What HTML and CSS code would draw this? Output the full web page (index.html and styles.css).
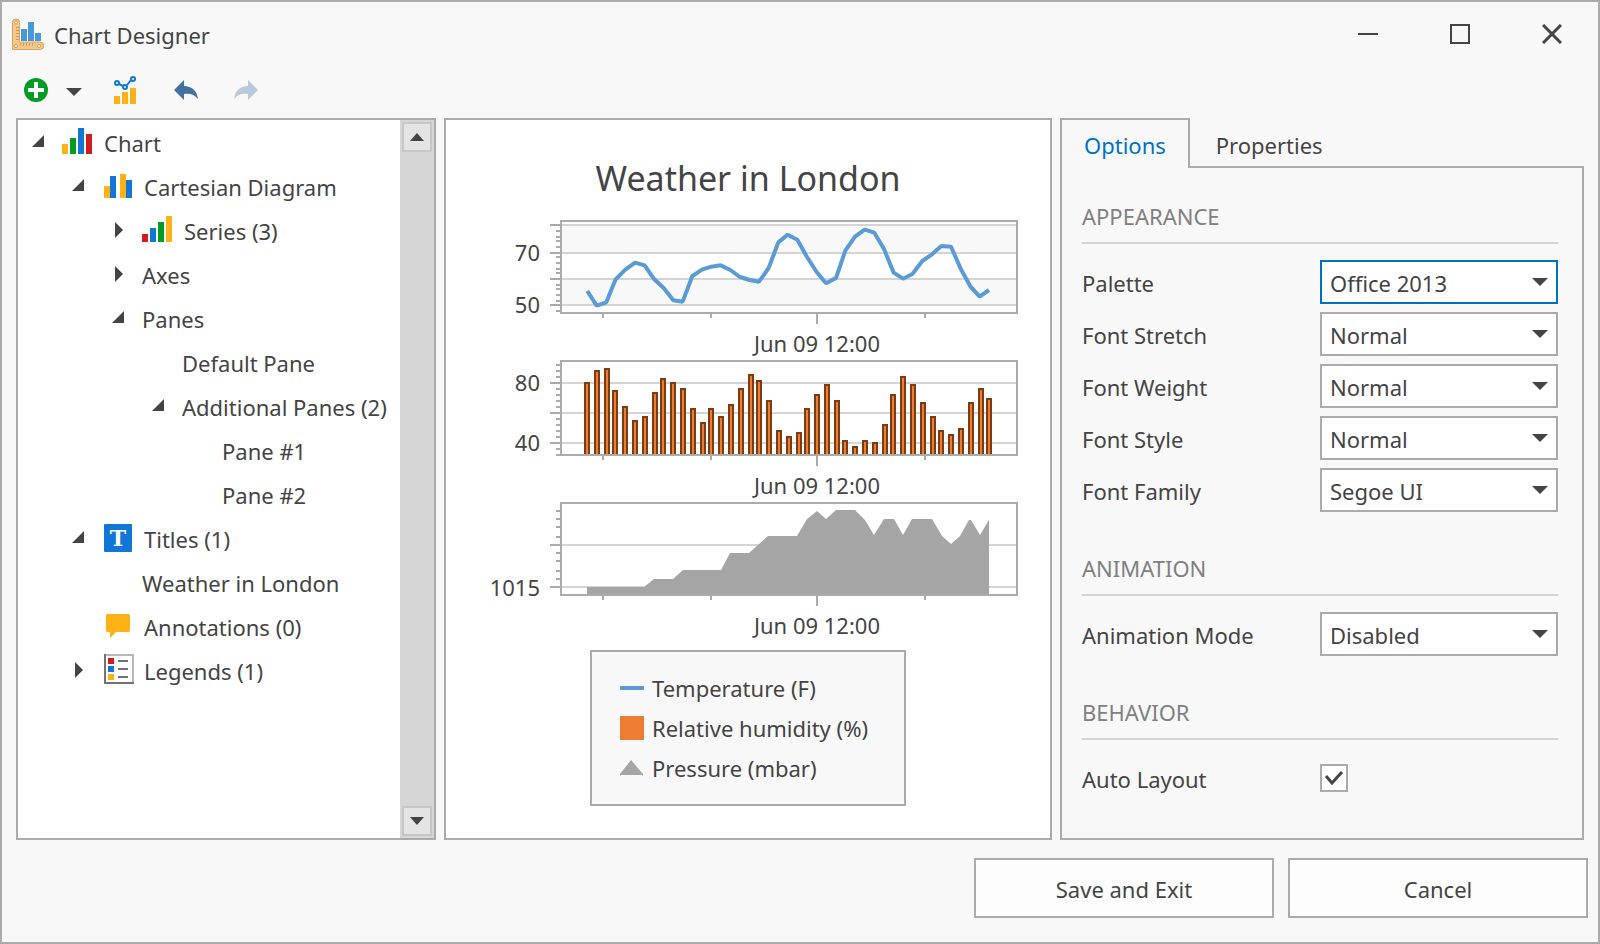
FILE: index.html
```html
<!DOCTYPE html>
<html lang="en">
<head>
<meta charset="utf-8">
<title>Chart Designer</title>
<meta name="viewport" content="width=device-width, initial-scale=1">
<link rel="stylesheet" href="styles.css">
</head>
<body>
<div class="window">
  <header class="titlebar">
    <svg class="app-icon" viewBox="0 0 32 32" aria-hidden="true">
      <g fill="#4a98dc"><path d="M9 11h6v12H9z"/><path d="M16 4h6v19h-6z"/><path d="M23 15h6v8h-6z"/></g>
      <path d="M.5 31.500V4.500a3.500 3.500 0 0 1 7 0V24H28a3.500 3.500 0 0 1 0 7.500z" fill="#f3c88d" stroke="#dfa35a"/>
      <path d="M4 9.500h3M4 12.500h3M4 15.500h3M4 18.500h3M4 21.500h3M8.500 25v3M11.500 25v3M14.500 25v3M17.500 25v3M20.500 25v3" stroke="#d49a52" fill="none"/>
      <g fill="#fff" stroke="#d49a52"><circle cx="4" cy="4.500" r="1.500"/><circle cx="4" cy="28" r="1.500"/><circle cx="27" cy="28" r="1.500"/></g>
    </svg>
    <h1 class="title">Chart Designer</h1>
    <div class="window-buttons">
      <button class="window-button" type="button" aria-label="Minimize"><svg viewBox="0 0 20 20"><path d="M0 10h20"/></svg></button>
      <button class="window-button" type="button" aria-label="Maximize"><svg viewBox="0 0 20 20"><path d="M1 1h18v18H1z"/></svg></button>
      <button class="window-button" type="button" aria-label="Close"><svg viewBox="0 0 20 20"><path d="M1 1l18 18M19 1L1 19"/></svg></button>
    </div>
  </header>

  <div class="toolbar" role="toolbar" aria-label="Chart tools">
    <button class="tool" type="button" aria-label="Add"><svg width="24" height="24" viewBox="0 0 24 24"><circle cx="12" cy="12" r="12" fill="#039c23"/><path d="M10 4h4v6h6v4h-6v6h-4v-6H4v-4h6z" fill="#fff"/></svg></button>
    <button class="tool tool-menu" type="button" aria-label="Add menu"><svg width="16" height="8" viewBox="0 0 16 8"><path d="M0 0h16L8 8z" fill="#444"/></svg></button>
    <button class="tool tool-type" type="button" aria-label="Change chart type"><svg width="24" height="28" viewBox="0 0 24 28"><path d="M0 20h6v8H0zM8 16h6v12H8zM16 12h6v16h-6z" fill="#ffb115"/><path d="M5 8l4 2M13 9l4-5" stroke="#1177d7" stroke-width="2"/><g fill="none" stroke="#1177d7" stroke-width="2"><circle cx="3" cy="7" r="2"/><circle cx="11" cy="11" r="2"/><circle cx="19" cy="3" r="2"/></g></svg></button>
    <button class="tool" type="button" aria-label="Undo"><svg width="24" height="20" viewBox="0 0 24 20"><path d="M0 10L10 0v6c8 0 13 5 14 13-4-5-8-6-14-5v6z" fill="#4272a1"/></svg></button>
    <button class="tool" type="button" aria-label="Redo" disabled><svg width="24" height="20" viewBox="0 0 24 20"><path d="M24 10L14 0v6C6 6 1 11 0 19c4-5 8-6 14-5v6z" fill="#b9c8da"/></svg></button>
  </div>

  <main class="panels">
    <section class="panel tree-panel" aria-label="Chart structure">
      <ul class="tree">
        <li>
          <div class="row">
            <button class="expander" type="button" aria-label="Collapse Chart"><svg viewBox="0 0 44 44"><path d="M26 14v12H14z"/></svg></button>
            <svg class="node-icon" viewBox="0 0 32 44"><path d="M0 23h6v10H0z" fill="#ffb115"/><path d="M8 17h6v16H8z" fill="#039c23"/><path d="M16 7h6v26h-6z" fill="#1177d7"/><path d="M24 13h6v20h-6z" fill="#d11c1c"/></svg>
            <span>Chart</span>
          </div>
          <ul>
            <li>
              <div class="row">
                <button class="expander" type="button" aria-label="Collapse Cartesian Diagram"><svg viewBox="0 0 44 44"><path d="M26 14v12H14z"/></svg></button>
                <svg class="node-icon" viewBox="0 0 32 44"><path d="M2 21h6v12H2zM18 9h6v24h-6z" fill="#ffb115"/><path d="M8 11h6v22H8zM24 15h6v18h-6z" fill="#1177d7"/></svg>
                <span>Cartesian Diagram</span>
              </div>
              <ul>
                <li>
                  <div class="row">
                    <button class="expander" type="button" aria-label="Expand Series"><svg viewBox="0 0 44 44"><path d="M17 13l8 8-8 8z"/></svg></button>
                    <svg class="node-icon" viewBox="0 0 32 44"><path d="M0 25h6v8H0z" fill="#d11c1c"/><path d="M8 19h6v14H8z" fill="#1177d7"/><path d="M16 13h6v20h-6z" fill="#039c23"/><path d="M24 7h6v26h-6z" fill="#ffb115"/></svg>
                    <span>Series (3)</span>
                  </div>
                </li>
                <li>
                  <div class="row">
                    <button class="expander" type="button" aria-label="Expand Axes"><svg viewBox="0 0 44 44"><path d="M17 13l8 8-8 8z"/></svg></button>
                    <span>Axes</span>
                  </div>
                </li>
                <li>
                  <div class="row">
                    <button class="expander" type="button" aria-label="Collapse Panes"><svg viewBox="0 0 44 44"><path d="M26 14v12H14z"/></svg></button>
                    <span>Panes</span>
                  </div>
                  <ul>
                    <li><div class="row leaf"><span>Default Pane</span></div></li>
                    <li>
                      <div class="row">
                        <button class="expander" type="button" aria-label="Collapse Additional Panes"><svg viewBox="0 0 44 44"><path d="M26 14v12H14z"/></svg></button>
                        <span>Additional Panes (2)</span>
                      </div>
                      <ul>
                        <li><div class="row leaf"><span>Pane #1</span></div></li>
                        <li><div class="row leaf"><span>Pane #2</span></div></li>
                      </ul>
                    </li>
                  </ul>
                </li>
              </ul>
            </li>
            <li>
              <div class="row">
                <button class="expander" type="button" aria-label="Collapse Titles"><svg viewBox="0 0 44 44"><path d="M26 14v12H14z"/></svg></button>
                <svg class="node-icon" viewBox="0 0 32 44"><rect x="2" y="7" width="28" height="28" rx="1" fill="#1177d7"/><text class="node-letter" x="16" y="29" text-anchor="middle">T</text></svg>
                <span>Titles (1)</span>
              </div>
              <ul>
                <li><div class="row leaf"><span>Weather in London</span></div></li>
              </ul>
            </li>
            <li>
              <div class="row leaf">
                <svg class="node-icon" viewBox="0 0 32 44"><path d="M5 9h22l1 1v16l-1 1H14l-6 6v-6H5l-1-1V10z" fill="#ffb115"/></svg>
                <span>Annotations (0)</span>
              </div>
            </li>
            <li>
              <div class="row">
                <button class="expander" type="button" aria-label="Expand Legends"><svg viewBox="0 0 44 44"><path d="M17 13l8 8-8 8z"/></svg></button>
                <svg class="node-icon" viewBox="0 0 32 44"><path d="M4 6h27v27" fill="none" stroke="#b8b8b8" stroke-width="2"/><path d="M3 5v29h29" fill="none" stroke="#727272" stroke-width="2"/><path d="M6 9h6v6H6z" fill="#d11c1c"/><path d="M6 17h6v6H6z" fill="#1177d7"/><path d="M6 25h6v6H6z" fill="#ffb115"/><path d="M16 12h10M16 20h10M16 28h10" stroke="#727272" stroke-width="2"/></svg>
                <span>Legends (1)</span>
              </div>
            </li>
          </ul>
        </li>
      </ul>
      <div class="scrollbar">
        <button class="scroll-button" type="button" aria-label="Scroll up"><svg width="14" height="8" viewBox="0 0 14 8"><path d="M7 0l7 8H0z"/></svg></button>
        <button class="scroll-button" type="button" aria-label="Scroll down"><svg width="14" height="8" viewBox="0 0 14 8"><path d="M0 0h14L7 8z"/></svg></button>
      </div>
    </section>

    <section class="panel chart-panel" aria-label="Chart preview">
      <h2 class="chart-title">Weather in London</h2>
      <svg class="chart" viewBox="472 216 552 424" role="img" aria-label="Temperature, humidity and pressure over time">
        <!-- temperature pane -->
        <path class="band" d="M561 225h456v28H561zM561 279h456v26H561z"/>
        <path class="grid" d="M561 225h456M561 253h456M561 279h456M561 305h456"/>
        <svg x="540" y="210" width="490" height="150" viewBox="0 0 1470 450">
          <polyline class="temperature" points="142,243 170,287 199,277 227,208 256,179 285,158 314,166 342,207 371,234 400,271 428,275 457,198 486,179 514,170 542,166 571,180 600,201 629,210 657,215 686,174 715,97 743,74 772,89 801,141 830,186 858,220 888,204 916,122 945,80 974,59 1003,68 1032,117 1061,188 1089,206 1117,192 1147,153 1176,133 1204,108 1233,110 1262,176 1291,229 1319,260 1347,240"/>
        </svg>
        <path class="axis" d="M561 221h456v92H561z"/>
        <path class="axis" d="M550 225h10M550 253h10M550 279h10M550 305h10M556 231h4M556 237h4M556 241h4M556 247h4M556 257h4M556 263h4M556 269h4M556 273h4M556 285h4M556 289h4M556 295h4M556 301h4M556 311h4M603 314v4M711 314v4M817 314v10M925 314v4"/>
        <text x="540" y="261" text-anchor="end">70</text>
        <text x="540" y="313" text-anchor="end">50</text>
        <text x="817" y="352" text-anchor="middle">Jun 09 12:00</text>

        <!-- humidity pane -->
        <path class="grid" d="M561 383h456M561 413h456M561 443h456"/>
        <svg x="540" y="350" width="490" height="150" viewBox="0 0 1470 450">
          <path class="humidity" d="M135 315V99h12V315M165 315V63h12V315M195 315V57h12V315M219 315V123h12V315M249 315V171h12V315M279 315V213h12V315M309 315V201h12V315M339 315V129h12V315M363 315V87h12V315M393 315V99h12V315M423 315V117h12V315M453 315V177h12V315M483 315V219h12V315M507 315V177h12V315M537 315V201h12V315M567 315V165h12V315M597 315V117h12V315M627 315V75h12V315M651 315V93h12V315M681 315V153h12V315M711 315V243h12V315M741 315V261h12V315M771 315V249h12V315M795 315V177h12V315M825 315V135h12V315M855 315V105h12V315M885 315V153h12V315M909 315V273h12V315M939 315V291h12V315M969 315V273h12V315M999 315V279h12V315M1029 315V225h12V315M1053 315V135h12V315M1083 315V81h12V315M1113 315V105h12V315M1143 315V159h12V315M1173 315V201h12V315M1197 315V243h12V315M1227 315V255h12V315M1257 315V237h12V315M1287 315V159h12V315M1317 315V117h12V315M1341 315V147h12V315"/>
        </svg>
        <path class="axis" d="M561 361h456v94H561z"/>
        <path class="axis" d="M550 383h10M550 413h10M550 443h10M556 365h4M556 371h4M556 377h4M556 389h4M556 395h4M556 401h4M556 407h4M556 419h4M556 425h4M556 431h4M556 437h4M556 449h4M556 455h4M603 456v4M711 456v4M817 456v10M925 456v4"/>
        <text x="540" y="391" text-anchor="end">80</text>
        <text x="540" y="451" text-anchor="end">40</text>
        <text x="817" y="494" text-anchor="middle">Jun 09 12:00</text>

        <!-- pressure pane -->
        <path class="grid" d="M561 545h456M561 587h456"/>
        <path class="pressure" d="M587 595V587H644L654 579H673L683 570H721L730 553H749L768 536H797L807 519L817 511L826 519L836 510H855L865 520L874 535L884 519H894L903 535L912 519H932L942 536L951 544L960 536L969 520H971L980 535L989 520V595z"/>
        <path class="axis" d="M561 503h456v92H561z"/>
        <path class="axis" d="M550 545h10M550 587h10M556 511h4M556 519h4M556 527h4M556 537h4M556 553h4M556 561h4M556 571h4M556 579h4M603 596v4M711 596v4M817 596v10M925 596v4"/>
        <text x="540" y="596" text-anchor="end">1015</text>
        <text x="817" y="634" text-anchor="middle">Jun 09 12:00</text>
      </svg>
      <ul class="legend">
        <li><svg width="24" height="24" viewBox="0 0 24 24"><path d="M0 10h24v4H0z" fill="#5b9bd5"/></svg>Temperature (F)</li>
        <li><svg width="24" height="24" viewBox="0 0 24 24"><path d="M0 0h24v24H0z" fill="#ed7d31"/></svg>Relative humidity (%)</li>
        <li><svg width="24" height="24" viewBox="0 0 24 24"><path d="M11 4l12 14v2L22 19H1L0 20v-2z" fill="#a5a5a5"/></svg>Pressure (mbar)</li>
      </ul>
    </section>

    <section class="side" aria-label="Element settings">
      <div class="tabs" role="tablist">
        <button class="tab active" type="button" role="tab" aria-selected="true">Options</button>
        <button class="tab" type="button" role="tab" aria-selected="false">Properties</button>
      </div>
      <form class="options" role="tabpanel">
        <fieldset class="group">
          <legend class="group-title">APPEARANCE</legend>
          <div class="field"><label for="palette">Palette</label><span class="combo"><select id="palette" class="focused"><option>Office 2013</option></select><svg viewBox="0 0 16 8"><path d="M0 0h16L8 8z"/></svg></span></div>
          <div class="field"><label for="stretch">Font Stretch</label><span class="combo"><select id="stretch"><option>Normal</option></select><svg viewBox="0 0 16 8"><path d="M0 0h16L8 8z"/></svg></span></div>
          <div class="field"><label for="weight">Font Weight</label><span class="combo"><select id="weight"><option>Normal</option></select><svg viewBox="0 0 16 8"><path d="M0 0h16L8 8z"/></svg></span></div>
          <div class="field"><label for="style">Font Style</label><span class="combo"><select id="style"><option>Normal</option></select><svg viewBox="0 0 16 8"><path d="M0 0h16L8 8z"/></svg></span></div>
          <div class="field"><label for="family">Font Family</label><span class="combo"><select id="family"><option>Segoe UI</option></select><svg viewBox="0 0 16 8"><path d="M0 0h16L8 8z"/></svg></span></div>
        </fieldset>
        <fieldset class="group">
          <legend class="group-title">ANIMATION</legend>
          <div class="field"><label for="mode">Animation Mode</label><span class="combo"><select id="mode"><option>Disabled</option></select><svg viewBox="0 0 16 8"><path d="M0 0h16L8 8z"/></svg></span></div>
        </fieldset>
        <fieldset class="group">
          <legend class="group-title">BEHAVIOR</legend>
          <div class="field"><label for="auto">Auto Layout</label><span class="check"><input id="auto" type="checkbox" checked><svg viewBox="0 0 28 28"><path d="M6 12l6 7L22 8"/></svg></span></div>
        </fieldset>
      </form>
    </section>
  </main>

  <footer class="footer">
    <button class="action" type="button">Save and Exit</button>
    <button class="action" type="button">Cancel</button>
  </footer>
</div>
</body>
</html>
```
FILE: styles.css
```css
* {
  box-sizing: border-box;
}

body {
  margin: 0;
  color: #444;
  font: 22px/32px "Noto Sans", "Open Sans", sans-serif;
}

button,
select {
  margin: 0;
  padding: 0;
  border: 0;
  border-radius: 0;
  background: none;
  color: inherit;
  font: inherit;
}

h1,
h2,
ul {
  margin: 0;
  padding: 0;
  font-weight: 400;
  list-style: none;
}

svg {
  display: block;
  flex: none;
}

.window {
  display: flex;
  flex-direction: column;
  min-height: 100vh;
  border: 2px solid #ababab;
  background: #f8f8f8;
}

.titlebar {
  display: flex;
  align-items: center;
  height: 64px;
  padding-left: 10px;
}

.app-icon {
  width: 32px;
  height: 32px;
}

.title {
  padding: 2px 0 0 10px;
  font-size: 22px;
}

.window-buttons {
  display: flex;
  margin-left: auto;
}

.window-button {
  display: grid;
  place-items: center;
  width: 92px;
  height: 64px;
}

.window-button svg {
  width: 20px;
  height: 20px;
  fill: none;
  stroke: #444;
  stroke-width: 2;
}

.window-button:last-child svg {
  stroke-width: 3;
}

.toolbar {
  display: flex;
  height: 52px;
  padding: 0 0 4px 22px;
}

.tool {
  display: grid;
  align-items: center;
  justify-items: start;
  width: 60px;
}

.tool:first-child {
  width: 42px;
}

.tool-menu {
  width: 48px;
  padding-top: 4px;
}

.panels {
  display: grid;
  flex: 1;
  grid-template-columns: 420px minmax(560px, 1fr) 524px;
  gap: 8px;
  padding: 0 14px;
}

.panel {
  border: 2px solid #ababab;
  background: #fff;
}

.tree-panel {
  display: flex;
}

.tree {
  flex: 1;
  padding-top: 1px;
}

.tree ul {
  padding-left: 40px;
}

.row {
  display: flex;
  height: 44px;
  line-height: 44px;
  white-space: nowrap;
}

.leaf {
  padding-left: 44px;
}

.expander svg {
  width: 44px;
  height: 44px;
  fill: #444;
}

.node-icon {
  width: 32px;
  height: 44px;
  margin-right: 10px;
}

.node-letter {
  fill: #fff;
  font: bold 22px "DejaVu Serif", serif;
}

.scrollbar {
  display: flex;
  flex-direction: column;
  justify-content: space-between;
  padding: 2px;
  background: #d6d6d6;
}

.scroll-button {
  display: grid;
  place-items: center;
  width: 30px;
  height: 30px;
  border: 2px solid #c6c6c6;
  background: #e4e4e4;
  fill: #444;
}

.chart-panel {
  display: flex;
  flex-direction: column;
  align-items: center;
}

.chart-title {
  padding: 34px 0 14px;
  font-size: 34px;
  line-height: 48px;
}

.chart {
  width: 552px;
  height: 424px;
}

.chart text {
  fill: #444;
}

.band {
  fill: #f8f8f8;
}

.grid {
  stroke: #d4d4d4;
  stroke-width: 2;
}

.axis {
  fill: none;
  stroke: #ababab;
  stroke-width: 2;
}

.temperature {
  fill: none;
  stroke: #5b9bd5;
  stroke-width: 12;
  stroke-linejoin: bevel;
}

.humidity {
  fill: #ed7d31;
  stroke: #7b3c13;
  stroke-width: 6;
}

.pressure {
  fill: #a5a5a5;
}

.legend {
  min-width: 316px;
  margin-top: 10px;
  padding: 16px 28px;
  border: 2px solid #ababab;
  background: #f8f8f8;
}

.legend li {
  display: flex;
  align-items: center;
  gap: 8px;
  height: 40px;
}

.side {
  display: flex;
  flex-direction: column;
}

.tabs {
  display: flex;
  z-index: 1;
}

.tab {
  height: 50px;
  padding: 4px 22px 0 26px;
}

.tab.active {
  padding: 2px 22px 0;
  border: solid #ababab;
  border-width: 2px 2px 0;
  background: #f8f8f8;
  color: #0072c6;
}

.options {
  flex: 1;
  margin-top: -2px;
  padding: 24px 24px 0 20px;
  border: 2px solid #ababab;
}

.group {
  display: flex;
  flex-direction: column;
  gap: 8px;
  min-width: 0;
  margin: 0 0 32px;
  padding: 0;
  border: 0;
}

.group-title {
  width: 100%;
  height: 52px;
  margin-bottom: 16px;
  padding: 0;
  border-bottom: 2px solid #d4d4d4;
  color: #808080;
  line-height: 48px;
}

.field {
  display: grid;
  grid-template-columns: 1fr 1fr;
  align-items: center;
  min-height: 44px;
}

.field label {
  padding-top: 2px;
}

.combo,
.check {
  display: grid;
  align-items: center;
}

.combo > *,
.check > * {
  grid-area: 1 / 1;
}

.combo select {
  width: 100%;
  height: 44px;
  padding: 2px 36px 0 8px;
  border: 2px solid #ababab;
  background: #fff;
  appearance: none;
}

.combo .focused {
  border-color: #0072c6;
}

.combo svg {
  justify-self: end;
  width: 16px;
  height: 8px;
  margin-right: 10px;
  fill: #444;
  pointer-events: none;
}

.check {
  justify-content: start;
}

.check input {
  width: 28px;
  height: 28px;
  margin: 0;
  border: 2px solid #ababab;
  background: #fff;
  appearance: none;
}

.check svg {
  width: 28px;
  height: 28px;
  fill: none;
  stroke: #444;
  stroke-width: 3;
  pointer-events: none;
}

.footer {
  display: flex;
  justify-content: flex-end;
  gap: 14px;
  padding: 18px 10px 24px;
}

.action {
  width: 300px;
  height: 60px;
  padding-top: 2px;
  border: 2px solid #ababab;
  background: #fdfdfd;
}
```
